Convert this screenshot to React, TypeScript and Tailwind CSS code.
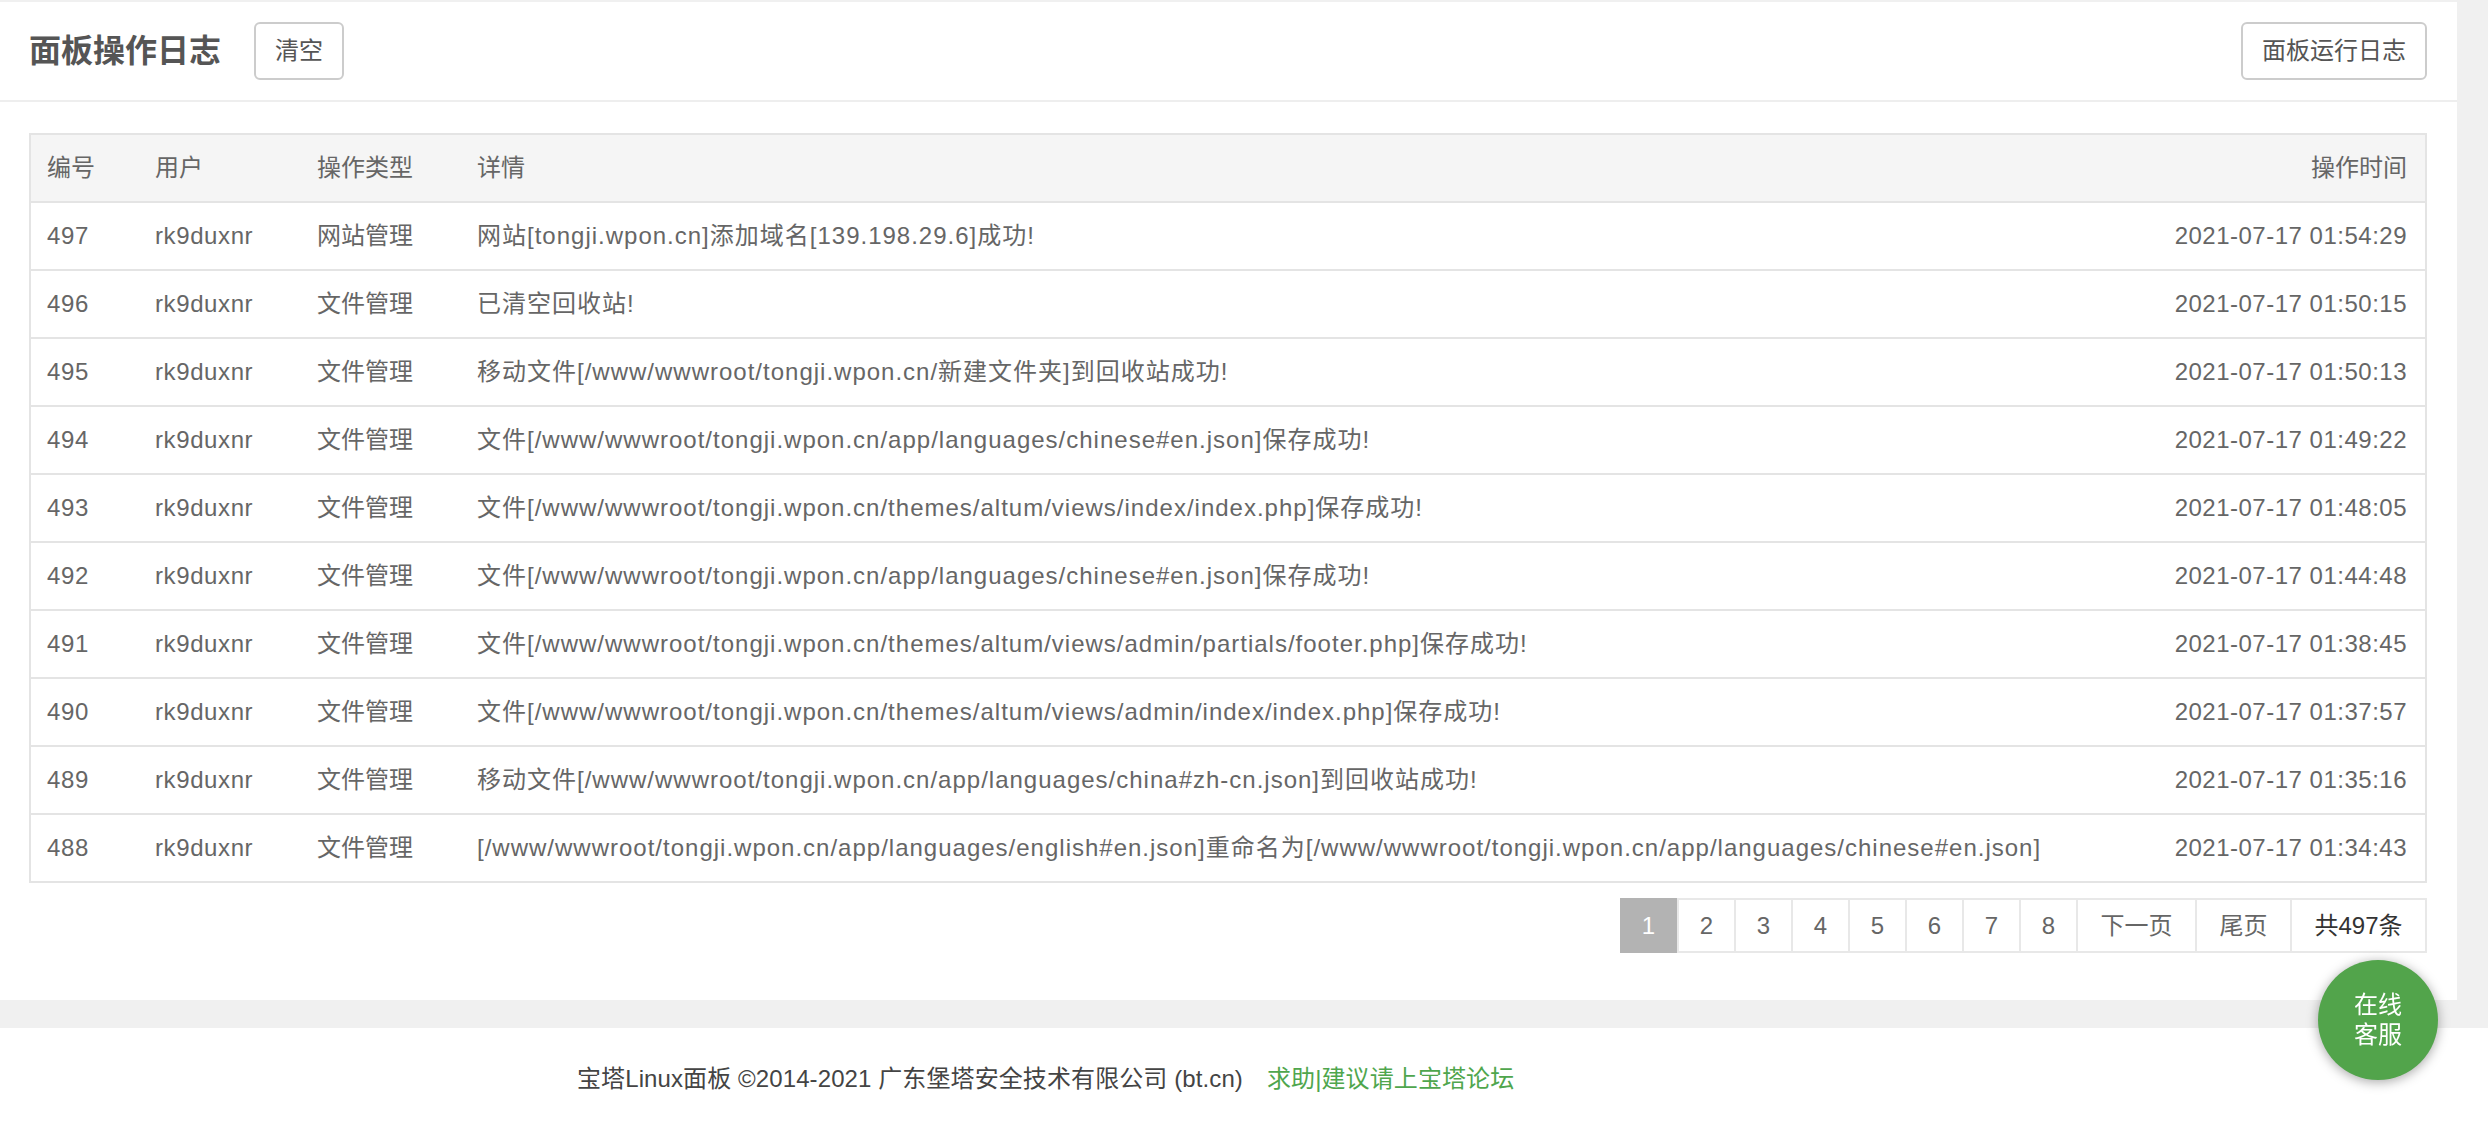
const logs = [
  { id: 497, user: "rk9duxnr", type: "网站管理", detail: "网站[tongji.wpon.cn]添加域名[139.198.29.6]成功!", time: "2021-07-17 01:54:29" },
  { id: 496, user: "rk9duxnr", type: "文件管理", detail: "已清空回收站!", time: "2021-07-17 01:50:15" },
  { id: 495, user: "rk9duxnr", type: "文件管理", detail: "移动文件[/www/wwwroot/tongji.wpon.cn/新建文件夹]到回收站成功!", time: "2021-07-17 01:50:13" },
  { id: 494, user: "rk9duxnr", type: "文件管理", detail: "文件[/www/wwwroot/tongji.wpon.cn/app/languages/chinese#en.json]保存成功!", time: "2021-07-17 01:49:22" },
  { id: 493, user: "rk9duxnr", type: "文件管理", detail: "文件[/www/wwwroot/tongji.wpon.cn/themes/altum/views/index/index.php]保存成功!", time: "2021-07-17 01:48:05" },
  { id: 492, user: "rk9duxnr", type: "文件管理", detail: "文件[/www/wwwroot/tongji.wpon.cn/app/languages/chinese#en.json]保存成功!", time: "2021-07-17 01:44:48" },
  { id: 491, user: "rk9duxnr", type: "文件管理", detail: "文件[/www/wwwroot/tongji.wpon.cn/themes/altum/views/admin/partials/footer.php]保存成功!", time: "2021-07-17 01:38:45" },
  { id: 490, user: "rk9duxnr", type: "文件管理", detail: "文件[/www/wwwroot/tongji.wpon.cn/themes/altum/views/admin/index/index.php]保存成功!", time: "2021-07-17 01:37:57" },
  { id: 489, user: "rk9duxnr", type: "文件管理", detail: "移动文件[/www/wwwroot/tongji.wpon.cn/app/languages/china#zh-cn.json]到回收站成功!", time: "2021-07-17 01:35:16" },
  { id: 488, user: "rk9duxnr", type: "文件管理", detail: "[/www/wwwroot/tongji.wpon.cn/app/languages/english#en.json]重命名为[/www/wwwroot/tongji.wpon.cn/app/languages/chinese#en.json]", time: "2021-07-17 01:34:43" },
];

const pages = ["1", "2", "3", "4", "5", "6", "7", "8"];

const App = () => {
  return (
    <div className="min-h-screen bg-[#f0f0f0] pt-[2px] font-['Liberation_Sans','Noto_Sans_CJK_SC',sans-serif] text-[#666]">
      {/* Panel */}
      <div className="mr-[31px] bg-white">
        {/* Heading */}
        <div className="flex h-[100px] items-center justify-between border-b-2 border-[#eee] pl-[29px] pr-[30px]">
          <div className="flex items-center">
            <h1 className="text-[32px] font-semibold text-[#555]">面板操作日志</h1>
            <button className="ml-[33px] h-[58px] rounded-[6px] border-2 border-[#ccc] px-[19px] text-[24px] text-[#555]">
              清空
            </button>
          </div>
          <button className="h-[58px] rounded-[6px] border-2 border-[#ccc] px-[19px] text-[24px] text-[#555]">
            面板运行日志
          </button>
        </div>

        {/* Table */}
        <div className="pl-[29px] pr-[30px] pt-[31px] pb-[47px]">
          <table className="w-full border-collapse border-2 border-[#e4e4e4] text-[24px]">
            <thead>
              <tr className="h-[68px] bg-[#f5f5f5] text-left">
                <th className="w-[109px] pl-[16px] font-normal">编号</th>
                <th className="w-[162px] pl-[16px] font-normal">用户</th>
                <th className="w-[160px] pl-[16px] font-normal">操作类型</th>
                <th className="pl-[16px] font-normal">详情</th>
                <th className="w-[320px] pr-[18px] text-right font-normal">操作时间</th>
              </tr>
            </thead>
            <tbody>
              {logs.map((log) => (
                <tr key={log.id} className="h-[68px] border-t-2 border-[#e4e4e4]">
                  <td className="pl-[16px] tracking-[0.6px]">{log.id}</td>
                  <td className="pl-[16px] tracking-[0.6px]">{log.user}</td>
                  <td className="pl-[16px]">{log.type}</td>
                  <td className="pl-[16px] whitespace-nowrap tracking-[1px]">{log.detail}</td>
                  <td className="pr-[18px] text-right tracking-[0.5px]">{log.time}</td>
                </tr>
              ))}
            </tbody>
          </table>

          {/* Pagination */}
          <div className="mt-[15px] flex justify-end">
            <div className="flex h-[55px] text-[24px]">
              {pages.map((p, i) => (
                <span
                  key={p}
                  className={
                    i === 0
                      ? "flex w-[57px] items-center justify-center bg-[#b3b3b3] text-white"
                      : "flex w-[57px] items-center justify-center border-y-2 border-l-2 border-[#e8e8e8]"
                  }
                >
                  {p}
                </span>
              ))}
              <span className="flex w-[119px] items-center justify-center border-y-2 border-l-2 border-[#e8e8e8]">下一页</span>
              <span className="flex w-[95px] items-center justify-center border-y-2 border-l-2 border-[#e8e8e8]">尾页</span>
              <span className="flex w-[137px] items-center justify-center border-2 border-[#e8e8e8] text-[#333]">共497条</span>
            </div>
          </div>
        </div>
      </div>

      {/* Footer */}
      <div className="mt-[28px] flex h-[102px] items-center bg-white pl-[577px] text-[24px] tracking-[0.1px] text-[#444]">
        <span>宝塔Linux面板 ©2014-2021 广东堡塔安全技术有限公司 (bt.cn)</span>
        <a className="ml-[24px] text-[#4fa64d]">求助|建议请上宝塔论坛</a>
      </div>

      {/* Online service bubble */}
      <div className="fixed bottom-[50px] right-[50px] flex h-[120px] w-[120px] flex-col items-center justify-center rounded-full bg-[#52a44b] text-[24px] leading-[30px] text-white shadow-[0_2px_12px_rgba(0,0,0,0.35)]">
        <span>在线</span>
        <span>客服</span>
      </div>
    </div>
  );
};

export default App;
